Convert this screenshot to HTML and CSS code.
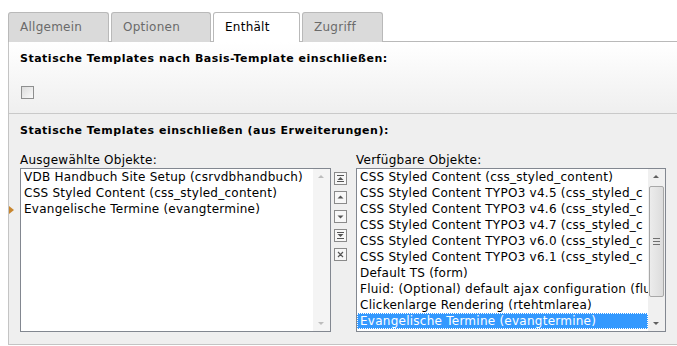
FILE: index.html
```html
<!DOCTYPE html>
<html>
  <head>
    <meta charset="utf-8" />
    <title>Enthält</title>
    <link rel="stylesheet" href="styles.css">
  </head>

  <body>
    <div class="tabs">
      <div class="tab tab-1">Allgemein</div>
      <div class="tab tab-2">Optionen</div>
      <div class="tab tab-3 active">Enthält</div>
      <div class="tab tab-4">Zugriff</div>
    </div>

    <div class="panel">
      <div class="section top">
        <h3>Statische Templates nach Basis-Template einschließen:</h3>
        <span class="check"></span>
      </div>

      <div class="section ext">
        <h3>Statische Templates einschließen (aus Erweiterungen):</h3>

        <div class="pickers">
          <div class="picker">
            <label>Ausgewählte Objekte:</label>
            <div class="box">
              <span class="marker"></span>
              <ul class="items">
                <li>VDB Handbuch Site Setup (csrvdbhandbuch)</li>
                <li>CSS Styled Content (css_styled_content)</li>
                <li>Evangelische Termine (evangtermine)</li>
              </ul>
              <div class="scroll off">
                <span class="arr up"></span>
                <span class="track"></span>
                <span class="arr down"></span>
              </div>
            </div>
          </div>

          <div class="btns">
            <span class="btn">
              <svg width="7" height="7" viewBox="0 0 7 7"><rect x="0" y="0" width="7" height="1" fill="#555"/><path d="M3.5 2 L6.5 5 L0.5 5 Z" fill="#555"/><rect x="0" y="6" width="7" height="1" fill="#555"/></svg>
            </span>
            <span class="btn">
              <svg width="7" height="7" viewBox="0 0 7 7"><path d="M3.5 1.5 L6.5 4.5 L0.5 4.5 Z" fill="#555"/></svg>
            </span>
            <span class="btn">
              <svg width="7" height="7" viewBox="0 0 7 7"><path d="M0.5 2.5 L6.5 2.5 L3.5 5.5 Z" fill="#555"/></svg>
            </span>
            <span class="btn">
              <svg width="7" height="7" viewBox="0 0 7 7"><rect x="0" y="0" width="7" height="1" fill="#555"/><path d="M0.5 2 L6.5 2 L3.5 5 Z" fill="#555"/><rect x="0" y="6" width="7" height="1" fill="#555"/></svg>
            </span>
            <span class="btn">
              <svg width="7" height="7" viewBox="0 0 7 7"><path d="M1 1 L6 6 M6 1 L1 6" stroke="#555" stroke-width="1.2"/></svg>
            </span>
          </div>

          <div class="picker">
            <label>Verfügbare Objekte:</label>
            <div class="box">
              <ul class="items">
                <li>CSS Styled Content (css_styled_content)</li>
                <li>CSS Styled Content TYPO3 v4.5 (css_styled_c</li>
                <li>CSS Styled Content TYPO3 v4.6 (css_styled_c</li>
                <li>CSS Styled Content TYPO3 v4.7 (css_styled_c</li>
                <li>CSS Styled Content TYPO3 v6.0 (css_styled_c</li>
                <li>CSS Styled Content TYPO3 v6.1 (css_styled_c</li>
                <li>Default TS (form)</li>
                <li>Fluid: (Optional) default ajax configuration (flu</li>
                <li>Clickenlarge Rendering (rtehtmlarea)</li>
                <li class="sel">Evangelische Termine (evangtermine)</li>
              </ul>
              <div class="scroll">
                <span class="arr up"></span>
                <span class="track"><span class="thumb"><i></i><i></i><i></i></span></span>
                <span class="arr down"></span>
              </div>
            </div>
          </div>
        </div>
      </div>
    </div>
  </body>
</html>
```

FILE: styles.css
```css
* {
    box-sizing: border-box;
}

body {
    margin: 0;
    background-color: #fff;
    font-family: 'DejaVu Sans', Verdana, sans-serif;
    font-size: 12px;
    letter-spacing: 0.25px;
    color: #000;
}

.tabs {
    display: flex;
    gap: 2px;
    padding: 12px 0 0 8px;
    height: 42px;
}

.tab {
    height: 30px;
    padding: 7px 0 0 11px;
    background-color: #dadada;
    border: 1px solid #b9b9b9;
    border-bottom: none;
    border-radius: 3px 3px 0 0;
    color: #6a6a6a;
    font-size: 12px;
}

.tab-1 { width: 101px; }
.tab-2 { width: 100px; }
.tab-3 { width: 87px; }
.tab-4 { width: 81px; }

.tab.active {
    background-color: #fff;
    color: #000;
    position: relative;
    z-index: 1;
}

.panel {
    margin-left: 8px;
    margin-top: -1px;
    border-top: 1px solid #b9b9b9;
    border-left: 1px solid #c4c4c4;
    border-bottom: 1px solid #c4c4c4;
}

.section h3 {
    margin: 0;
    height: 13px;
    font-size: 11px;
    font-weight: bold;
    letter-spacing: 0.5px;
    line-height: 13px;
}

.top {
    height: 72px;
    padding: 10px 11px 0;
    background: linear-gradient(#fff, #efefef);
    border-bottom: 1px solid #c9c9c9;
}

.check {
    display: block;
    width: 13px;
    height: 13px;
    margin: 21px 0 0 1px;
    border: 1px solid #8e8f8f;
    background: linear-gradient(135deg, #dcdcdc, #fafafa);
}

.ext {
    height: 230px;
    padding: 10px 11px 0;
    background-color: #efefef;
}

.pickers {
    display: flex;
    margin-top: 16px;
}

.picker label {
    display: block;
    height: 14px;
    margin-bottom: 1px;
    line-height: 14px;
}

.box {
    position: relative;
    display: flex;
    width: 311px;
    height: 164px;
    border: 1px solid #828790;
    background-color: #fff;
}

.picker:last-child .box {
    width: 310px;
}

.marker {
    position: absolute;
    left: -12px;
    top: 37px;
    border-left: 5px solid #c8862e;
    border-top: 4px solid transparent;
    border-bottom: 4px solid transparent;
}

.items {
    flex: 1;
    min-width: 0;
    margin: 0;
    padding: 0;
    list-style: none;
    overflow: hidden;
}

.items li {
    height: 16px;
    padding-left: 3px;
    line-height: 16px;
    white-space: nowrap;
}

.items li.sel {
    background-color: #3399ff;
    color: #fff;
    outline: 1px dotted #fff;
    outline-offset: -1px;
}

.scroll {
    display: flex;
    flex-direction: column;
    width: 17px;
    background-color: #f0f0f0;
}

.scroll.off {
    background-color: #f4f4f4;
}

.arr {
    position: relative;
    height: 17px;
}

.arr::after {
    content: '';
    position: absolute;
    left: 5px;
    border-left: 3px solid transparent;
    border-right: 3px solid transparent;
}

.arr.up::after {
    top: 6px;
    border-bottom: 3px solid #606060;
}

.arr.down::after {
    top: 8px;
    border-top: 3px solid #606060;
}

.off .arr.up::after {
    border-bottom-color: #bdbdbd;
}

.off .arr.down::after {
    border-top-color: #bdbdbd;
}

.track {
    flex: 1;
    padding: 0 1px;
}

.thumb {
    display: flex;
    flex-direction: column;
    justify-content: center;
    align-items: center;
    gap: 2px;
    height: 111px;
    border: 1px solid #a8a8a8;
    border-radius: 2px;
    background: linear-gradient(90deg, #ececec, #dcdcdc);
}

.thumb i {
    display: block;
    width: 7px;
    height: 1px;
    background-color: #707070;
}

.btns {
    display: flex;
    flex-direction: column;
    gap: 6px;
    width: 26px;
    padding: 19px 0 0 3px;
}

.btn {
    display: flex;
    align-items: center;
    justify-content: center;
    width: 13px;
    height: 13px;
    border: 1px solid #8a8a8a;
    background-color: #f7f7f7;
}
```
